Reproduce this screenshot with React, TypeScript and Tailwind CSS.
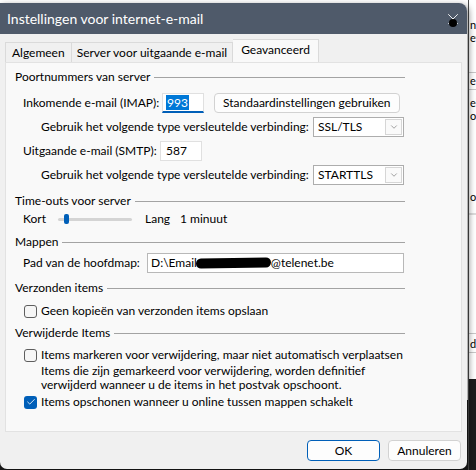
import { ChevronDown, X, Check } from 'lucide-react'

const font = { fontFamily: 'Lato, "Noto Sans", sans-serif' }

function GroupTitle({ title }: { title: string }) {
  return (
    <div className="flex items-center gap-[4px] pl-[9px] pr-[56px] h-[18px]">
      <span className="whitespace-nowrap">{title}</span>
      <div className="flex-1 h-px bg-[#a3a3a3]" />
    </div>
  )
}

function Combo({ value }: { value: string }) {
  return (
    <div className="flex flex-none items-center justify-between w-[91px] h-[20px] border border-[#adadad] bg-white pl-[4px] pr-[1px]">
      <span>{value}</span>
      <div className="flex items-center justify-center w-[17px] h-[16px] border border-[#d6d6d6] bg-[#fafafa]">
        <ChevronDown className="w-[10px] h-[10px] text-[#6b6b6b]" strokeWidth={1.5} />
      </div>
    </div>
  )
}

function Box({ checked }: { checked?: boolean }) {
  return checked ? (
    <div className="flex flex-none items-center justify-center w-[13px] h-[13px] rounded-[3px] bg-[#005fb8]">
      <Check className="w-[10px] h-[10px] text-white" strokeWidth={2} />
    </div>
  ) : (
    <div className="flex-none w-[13px] h-[13px] rounded-[3px] border border-[#5e5e5e] bg-[#f6f6f6]" />
  )
}

export default function App() {
  return (
    <div className="relative w-[476px] h-[470px] overflow-hidden bg-white text-[12px] text-black whitespace-nowrap" style={font}>
      {/* desktop behind the dialog */}
      <div className="absolute inset-0 flex flex-col">
        <div className="h-[4px] overflow-hidden leading-[8px] -mt-[4px] font-bold pl-[10px] text-[13px] flex justify-between pr-[4px]">
          <span>Instellingen voor internet</span>
          <span>Accountinstellingen</span>
        </div>
        <div className="flex-1" />
        <div className="h-[70px] bg-[#1b1b1b]" />
      </div>
      <div className="absolute left-[468px] top-0 w-[8px] h-full flex flex-col text-[11px] leading-[13px] overflow-hidden border-l border-[#4a4a4a] bg-white">
        <div className="h-[18px]" />
        <div className="pl-[1px]">n -</div>
        <div className="pl-[1px]">ev</div>
        <div className="h-[28px]" />
        <div className="h-px bg-[#c8c8c8]" />
        <div className="pl-[1px] mt-[1px]">e</div>
        <div className="h-px bg-[#c8c8c8] mt-[2px]" />
        <div className="h-[6px]" />
        <div className="pl-[1px]">el</div>
        <div className="pl-[1px]">op</div>
        <div className="h-[68px]" />
        <div className="pl-[1px]">o</div>
        <div className="h-[10px]" />
        <div className="h-[2px] bg-[#dcdcdc]" />
        <div className="h-[118px]" />
        <div className="h-px bg-[#c8c8c8]" />
        <div className="pl-[1px] mt-[3px]">de</div>
        <div className="h-px bg-[#c8c8c8] mt-[2px]" />
        <div className="h-[26px]" />
        <div className="flex-1 bg-[#1b1b1b]" />
      </div>

      {/* dialog window */}
      <div className="absolute left-0 top-[3px] w-[467px] h-[466px] flex flex-col rounded-tr-[8px] rounded-b-[7px] overflow-hidden bg-[#f0f0f0] shadow-[2px_2px_6px_rgba(0,0,0,0.45)]">
        <div className="flex items-center justify-between h-[31px] bg-[#4f5a6a] text-white pl-[7px] pr-[5px]">
          <span className="text-[14px]">Instellingen voor internet-e-mail</span>
          <div className="relative">
            <X className="w-[18px] h-[18px]" strokeWidth={1.2} />
            <div className="absolute left-[5px] top-[9px] w-[8px] h-[8px] rounded-full bg-black" />
          </div>
        </div>

        {/* tab strip */}
        <div className="flex items-end h-[28px] pl-[5px]">
          <div className="h-[20px] px-[6px] flex items-center border border-b-0 border-[#dadada] bg-[#f0f0f0]">Algemeen</div>
          <div className="h-[20px] px-[5px] flex items-center border border-b-0 border-l-0 border-[#dadada] bg-[#f0f0f0]">Server voor uitgaande e-mail</div>
          <div className="h-[23px] px-[8px] pb-[3px] flex items-center border border-b-0 border-l-0 border-[#dadada] bg-[#f9f9f9]">Geavanceerd</div>
        </div>

        {/* tab page */}
        <div className="mx-[5px] h-[370px] border border-[#e2e2e2] bg-[#f9f9f9] flex flex-col pt-[5px]">
          <GroupTitle title="Poortnummers van server" />
          <div className="flex items-center h-[24px] mt-[5px] pl-[17px]">
            <span className="flex-none w-[139px]">Inkomende e-mail (IMAP):</span>
            <div className="flex flex-none items-center w-[42px] h-[20px] bg-white border border-[#e0e0e0] border-b-2 border-b-[#005fb8] pl-[3px]">
              <span className="bg-[#0078d7] text-white leading-[15px] px-[1px]">993</span>
            </div>
            <button className="ml-[10px] h-[20px] px-[8px] rounded-[4px] border border-[#d2d2d2] bg-[#fdfdfd] leading-none">Standaardinstellingen gebruiken</button>
          </div>
          <div className="flex items-center h-[22px] mt-[1px] pl-[35px]">
            <span className="flex-none w-[272px]">Gebruik het volgende type versleutelde verbinding:</span>
            <Combo value="SSL/TLS" />
          </div>
          <div className="flex items-center h-[24px] mt-[1px] pl-[17px]">
            <span className="flex-none w-[137px]">Uitgaande e-mail (SMTP):</span>
            <div className="flex flex-none items-center w-[42px] h-[20px] bg-white border border-[#e0e0e0] pl-[5px]">587</div>
          </div>
          <div className="flex items-center h-[22px] mt-[1px] pl-[35px]">
            <span className="flex-none w-[272px]">Gebruik het volgende type versleutelde verbinding:</span>
            <Combo value="STARTTLS" />
          </div>

          <div className="mt-[6px]"><GroupTitle title="Time-outs voor server" /></div>
          <div className="flex items-center h-[18px] pl-[17px]">
            <span className="flex-none w-[35px]">Kort</span>
            <div className="relative flex-none w-[74px] h-[3px] bg-[#d4d4d4] rounded-full">
              <div className="absolute left-[6px] -top-[4px] w-[5px] h-[10px] rounded-[2px] bg-[#005fb8]" />
            </div>
            <span className="ml-[13px]">Lang</span>
            <span className="ml-[10px]">1 minuut</span>
          </div>

          <div className="mt-[5px]"><GroupTitle title="Mappen" /></div>
          <div className="flex items-center h-[24px] pl-[17px]">
            <span className="flex-none w-[124px]">Pad van de hoofdmap:</span>
            <div className="flex flex-none items-center w-[257px] h-[20px] bg-white border border-[#b8b8b8] pl-[3px]">
              <span>D:\Email</span>
              <span className="inline-block w-[75px] h-[10px] rounded-full bg-black -ml-[1px] -rotate-1" />
              <span>@telenet.be</span>
            </div>
          </div>

          <div className="mt-[4px]"><GroupTitle title="Verzonden items" /></div>
          <div className="flex items-center gap-[4px] h-[22px] pl-[18px] mt-[3px]">
            <Box />
            <span>Geen kopieën van verzonden items opslaan</span>
          </div>

          <div className="mt-[2px]"><GroupTitle title="Verwijderde Items" /></div>
          <div className="flex items-center gap-[4px] h-[22px] pl-[18px] mt-[2px]">
            <Box />
            <span>Items markeren voor verwijdering, maar niet automatisch verplaatsen</span>
          </div>
          <p className="pl-[35px] leading-[14px] -mt-[2px]">
            Items die zijn gemarkeerd voor verwijdering, worden definitief<br />verwijderd wanneer u de items in het postvak opschoont.
          </p>
          <div className="flex items-center gap-[4px] h-[20px] pl-[18px]">
            <Box checked />
            <span>Items opschonen wanneer u online tussen mappen schakelt</span>
          </div>
        </div>

        {/* dialog buttons */}
        <div className="flex justify-end gap-[8px] pr-[6px] pt-[8px]">
          <button className="w-[73px] h-[21px] rounded-[4px] border border-[#005fb8] bg-[#fdfdfd] leading-none">OK</button>
          <button className="w-[73px] h-[21px] rounded-[4px] border border-[#d2d2d2] bg-[#fdfdfd] leading-none">Annuleren</button>
        </div>
      </div>
    </div>
  )
}
